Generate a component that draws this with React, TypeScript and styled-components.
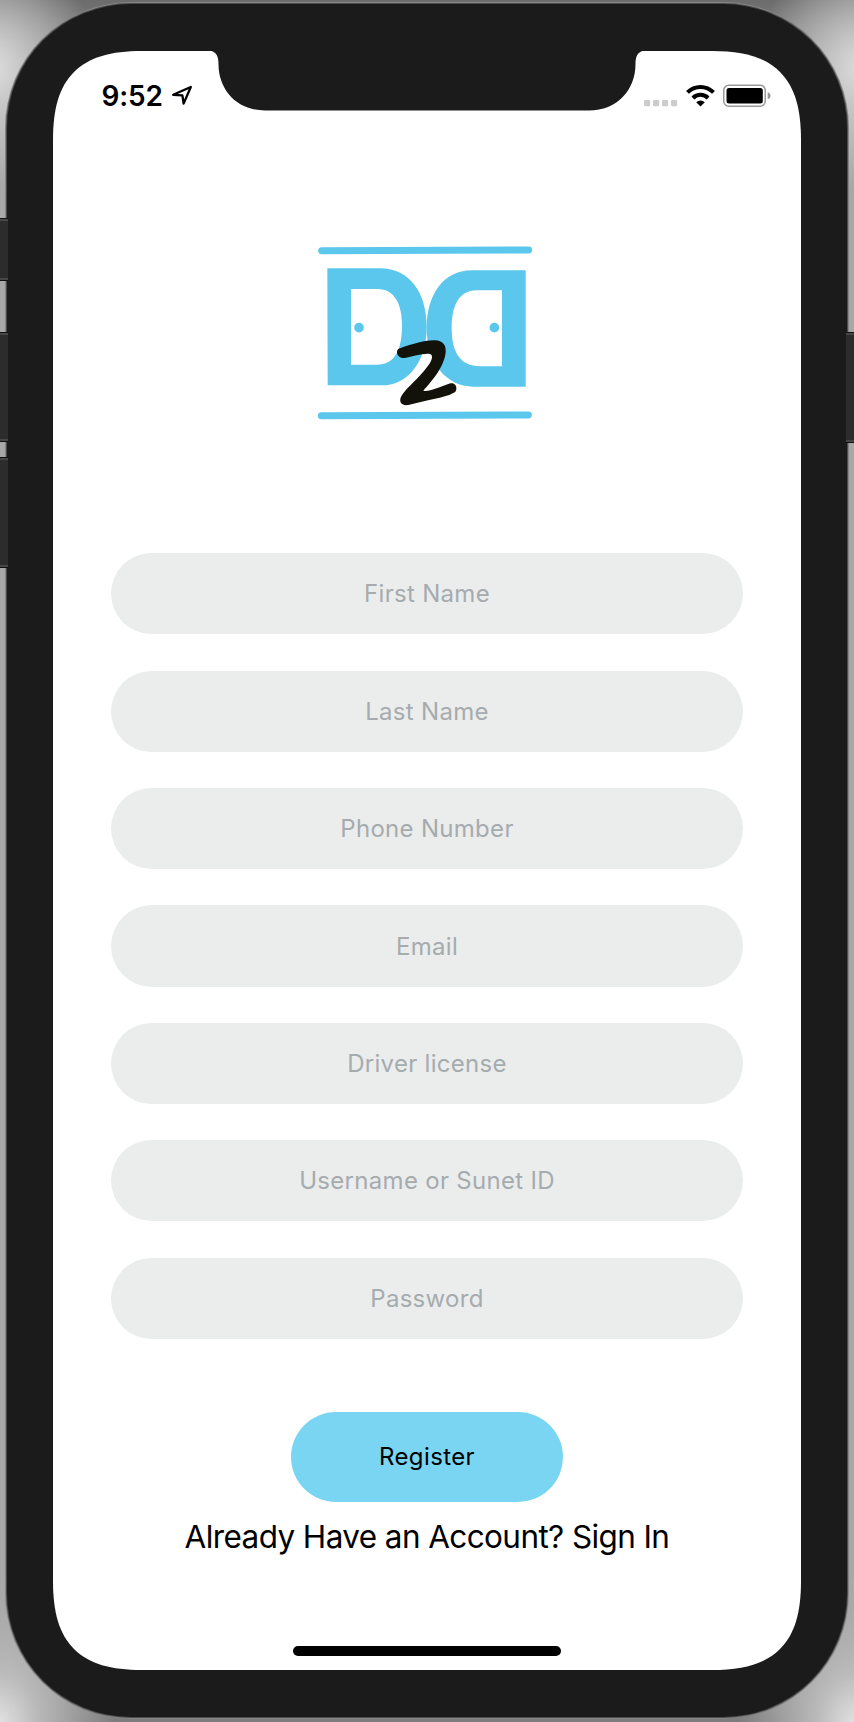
import React from "react";
import styled, { createGlobalStyle } from "styled-components";

const GlobalStyle = createGlobalStyle`
  *, *::before, *::after { box-sizing: border-box; }
  html, body { margin: 0; padding: 0; }
  body { font-family: Inter, "Liberation Sans", sans-serif; background: #a8a8a8; }
`;

const Desktop = styled.div`
  position: relative;
  width: 854px;
  height: 1722px;
  padding: 4px 7px 5px;
  overflow: hidden;
  background:
    radial-gradient(ellipse 110px 120px at -10px 68px, #e0e0e0 0%, rgba(205, 205, 205, 0.8) 35%, rgba(150, 150, 150, 0) 100%),
    radial-gradient(ellipse 110px 120px at 864px 68px, #e0e0e0 0%, rgba(205, 205, 205, 0.8) 35%, rgba(150, 150, 150, 0) 100%),
    radial-gradient(ellipse 120px 150px at -4px 1726px, #e6e6e6 0%, rgba(200, 200, 200, 0.8) 35%, rgba(140, 140, 140, 0) 100%),
    radial-gradient(ellipse 120px 150px at 858px 1726px, #e6e6e6 0%, rgba(200, 200, 200, 0.8) 35%, rgba(140, 140, 140, 0) 100%),
    linear-gradient(to bottom, #6c6c6c 0, #a8a8a8 110px, #a8a8a8 1580px, #7c7c7c 1722px);
`;

const Shell = styled.div`
  width: 840px;
  height: 1713px;
  padding: 47px 46px;
  border-radius: 124px;
  background: #1b1b1b;
  box-shadow: 0 0 0 1px #4c4c4c, 0 0 0 2px #858585;
`;

const Screen = styled.main`
  position: relative;
  display: flex;
  flex-direction: column;
  align-items: center;
  width: 748px;
  height: 1619px;
  background: #fff;
  clip-path: path("M0 89C0 58 6 36 21 21C36 6 58 0 89 0H659C690 0 712 6 727 21C742 36 748 58 748 89V1530C748 1561 742 1583 727 1598C712 1613 690 1619 659 1619H89C58 1619 36 1613 21 1598C6 1583 0 1561 0 1530Z");
`;

const SideButton = styled.div<{ $side: "left" | "right"; $top: number; $height: number }>`
  position: absolute;
  ${(p) => p.$side}: 0;
  top: ${(p) => p.$top}px;
  width: 8px;
  height: ${(p) => p.$height}px;
  background: #2c2c2c;
  border: solid #111;
  border-width: 1px 0;
  box-shadow: inset 0 2px #464646, inset 0 -2px #464646;
`;

const StatusBar = styled.header`
  display: flex;
  justify-content: space-between;
  align-items: flex-start;
  width: 100%;
  height: 60px;
  padding: 33px 30.5px 0 48.5px;
`;

const StatusGroup = styled.div<{ $gap: number }>`
  display: flex;
  align-items: flex-start;
  gap: ${(p) => p.$gap}px;
`;

const Clock = styled.span`
  width: 63px;
  font-size: 28px;
  line-height: 24px;
  font-weight: 600;
  letter-spacing: -0.15px;
  white-space: nowrap;
`;

const NotchArt = styled.svg`
  position: absolute;
  left: 154px;
  top: 0;
`;

const LogoArt = styled.svg`
  margin: 119px 0 0 -4px;
  flex: none;
`;

const Form = styled.form`
  display: flex;
  flex-direction: column;
  align-items: center;
  gap: 36.1px;
  width: 632px;
  margin: 123.2px 0 0;
`;

const Field = styled.input`
  width: 100%;
  height: 81.3px;
  padding: 0 24px;
  border: 0;
  border-radius: 41px;
  background: #ebeded;
  color: #2b2f31;
  font: 400 24px Inter, "Liberation Sans", sans-serif;
  letter-spacing: 0.3px;
  text-align: center;
  &::placeholder { color: #a6abad; opacity: 1; }
`;

const RegisterButton = styled.button`
  width: 272px;
  height: 90.3px;
  margin-top: 36.7px;
  border: 0;
  border-radius: 46px;
  background: #7ad5f3;
  color: #000;
  font: 400 24px Inter, "Liberation Sans", sans-serif;
  letter-spacing: 0.4px;
`;

const SignInLine = styled.p`
  margin: 15px 0 0;
  font-size: 31.5px;
  line-height: 40px;
  letter-spacing: -0.6px;
  white-space: nowrap;
  color: #000;
`;

const HomeIndicator = styled.div`
  width: 268px;
  height: 10px;
  margin: auto 0 14px;
  border-radius: 5px;
  background: #000;
`;

const Notch = () => (
  <NotchArt width="440" height="60" viewBox="0 0 440 60">
    <path
      d="M0 -1C8 0 11.500 3 11.500 13C11.500 39 30 59.500 58 59.500H382C410 59.500 428.500 39 428.500 13C428.500 3 432 0 440 -1Z"
      fill="#1b1b1b"
    />
  </NotchArt>
);

const LocationArrow = () => (
  <svg width="22" height="22" viewBox="0 0 22 22">
    <path d="M2.200 10.800L19.800 3L12.600 19.600L11.400 11.300Z" fill="none" stroke="#000" strokeWidth="2.300" strokeLinejoin="round" />
  </svg>
);

const SignalDots = () => (
  <svg width="34" height="24" viewBox="0 0 34 24">
    {[0, 9, 18, 27].map((x) => (
      <rect key={x} x={x} y="16" width="6.200" height="6.200" rx="1.200" fill="#ccc" />
    ))}
  </svg>
);

const Wifi = () => (
  <svg width="29" height="24" viewBox="0 0 29 24">
    <g fill="none" stroke="#000" strokeWidth="4">
      <path d="M1.500 8.400A18.200 18.200 0 0 1 27.500 8.400" />
      <path d="M6.900 14A10.800 10.800 0 0 1 22.100 14" />
    </g>
    <path d="M10.200 18.200A6.200 6.200 0 0 1 18.800 18.200L14.500 22.400Z" fill="#000" />
  </svg>
);

const Battery = () => (
  <svg width="48" height="24" viewBox="0 0 48 24">
    <rect x="0.750" y="1.250" width="41.500" height="21" rx="5" fill="none" stroke="#999" strokeWidth="1.500" />
    <rect x="3.500" y="4" width="36.300" height="15.500" rx="2.500" fill="#000" />
    <path d="M44.700 8.200C48.500 9.300 48.500 14.200 44.700 15.300Z" fill="#999" />
  </svg>
);

const DoorLogo = () => (
  <LogoArt width="250" height="200" viewBox="0 0 750 600" role="img" aria-label="D2D">
    <g stroke="#5bc7ed" strokeWidth="21" strokeLinecap="round">
      <path d="M65 62L686 60" />
      <path d="M64 557L685 555" />
    </g>
    <g fill="#5bc7ed" fillRule="evenodd">
      <path d="M82 115H240C330 115 380 190 380 290C380 400 320 466 245 466H83ZM153 177V404H230C285 404 306 360 306 285C306 225 285 177 232 177Z" />
      <path d="M677 121H515C430 121 380 195 380 295C380 400 440 470 520 470H677ZM606 181V409H540C480 409 455 365 455 295C455 230 475 181 530 181Z" />
      <circle cx="177" cy="293" r="14.500" />
      <circle cx="583" cy="293" r="14.500" />
    </g>
    <path
      fill="#12120b"
      d="M300 355C340 340 380 330 405 331C428 332 439 345 437 367C433 410 395 455 370 482C387 486 415 472 447 461C461 456 471 465 469 478C468 487 460 490 450 494C410 507 365 513 325 525C305 528 296 516 303 500C317 475 345 455 370 425C385 407 398 390 396 377C393 367 370 372 350 376L315 384C300 386 290 375 291 366C291 360 295 357 300 355Z"
    />
  </LogoArt>
);

const fields = ["First Name", "Last Name", "Phone Number", "Email", "Driver license", "Username or Sunet ID", "Password"];

export default function App() {
  return (
    <>
      <GlobalStyle />
      <Desktop>
        <Shell>
          <Screen>
            <Notch />
            <StatusBar>
              <StatusGroup $gap={6.5}>
                <Clock>9:52</Clock>
                <LocationArrow />
              </StatusGroup>
              <StatusGroup $gap={8}>
                <SignalDots />
                <Wifi />
                <Battery />
              </StatusGroup>
            </StatusBar>
            <DoorLogo />
            <Form>
              {fields.map((name) => (
                <Field key={name} placeholder={name} aria-label={name} type={name === "Password" ? "password" : "text"} />
              ))}
              <RegisterButton type="button">Register</RegisterButton>
            </Form>
            <SignInLine>Already Have an Account? Sign In</SignInLine>
            <HomeIndicator />
          </Screen>
        </Shell>
        <SideButton $side="left" $top={218} $height={63} />
        <SideButton $side="left" $top={332} $height={110} />
        <SideButton $side="left" $top={457} $height={111} />
        <SideButton $side="right" $top={332} $height={111} />
      </Desktop>
    </>
  );
}
